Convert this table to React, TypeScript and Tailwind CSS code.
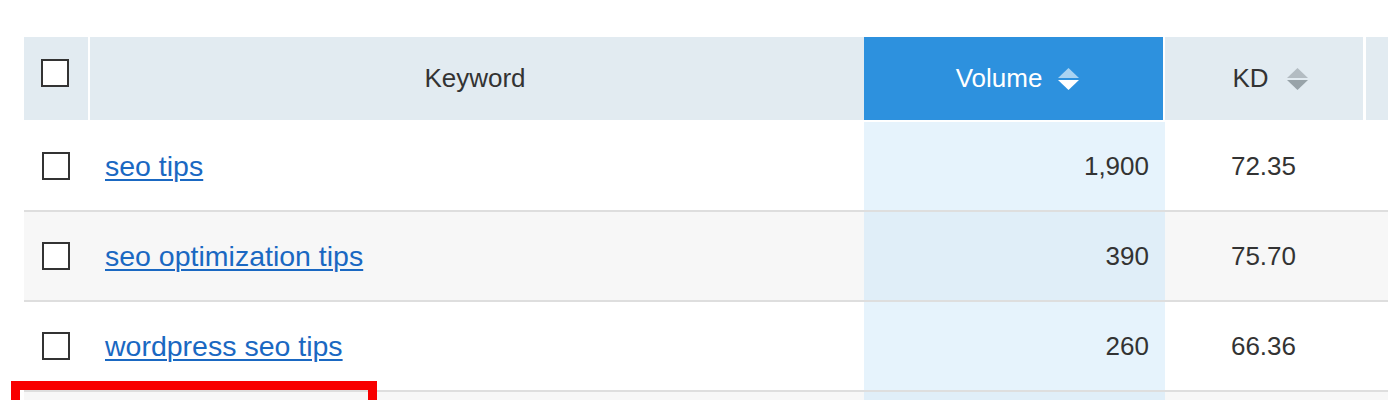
const rows = [
  { keyword: "seo tips", volume: "1,900", kd: "72.35" },
  { keyword: "seo optimization tips", volume: "390", kd: "75.70" },
  { keyword: "wordpress seo tips", volume: "260", kd: "66.36" },
  { keyword: "", volume: "", kd: "" },
]

const SortIcon = ({ up, down }: { up: string; down: string }) => (
  <svg width="21" height="22" viewBox="0 0 21 22">
    <polygon points="10.5,0 21,10 0,10" fill={up} />
    <polygon points="0,12 21,12 10.5,22" fill={down} />
  </svg>
)

const Box = () => <div className="w-[28px] h-[28px] border-2 border-[#333] bg-white shrink-0" />

const App = () => {
  return (
    <div className="relative h-[400px] w-[1388px] overflow-hidden bg-white font-['Liberation_Sans',Arial,sans-serif] text-[#333]">
      <div className="pt-[37px] pl-[24px]">
        <div className="w-[1500px]">
          {/* header */}
          <div className="flex h-[85px] bg-[#e2ebf1] text-[26px] border-b-2 border-white">
            <div className="w-[66px] border-r-2 border-white pl-[17px] pt-[22px]">
              <Box />
            </div>
            <div className="w-[774px] flex items-center justify-center pr-[4px]">Keyword</div>
            <div className="w-[301px] border-r-2 border-white bg-[#2d91de] text-white flex items-center justify-center gap-[16px] pl-[8px]">
              Volume
              <SortIcon up="#a9d3f2" down="#ffffff" />
            </div>
            <div className="w-[201px] border-r-[3px] border-white flex items-center justify-center gap-[18px] pl-[12px]">
              KD
              <SortIcon up="#b3bcc2" down="#98a3a9" />
            </div>
            <div className="flex-1" />
          </div>
          {/* body */}
          {rows.map((r, i) => (
            <div
              key={i}
              className={`flex h-[90px] border-b-2 border-[#dedede] ${i % 2 === 1 ? "bg-[#f7f7f7]" : "bg-white"}`}
            >
              <div className="w-[66px] pl-[18px] flex items-center">
                {r.keyword && <Box />}
              </div>
              <div className="w-[774px] flex items-center pl-[15px]">
                <a href="#" className="text-[28.5px] text-[#1a68c2] underline underline-offset-[3px] decoration-[1.5px]">
                  {r.keyword}
                </a>
              </div>
              <div
                className={`w-[301px] flex items-center justify-end pr-[16px] text-[26px] ${i % 2 === 1 ? "bg-[#e0eef8]" : "bg-[#e6f3fc]"}`}
              >
                {r.volume}
              </div>
              <div className="w-[197px] flex items-center justify-center text-[26px]">{r.kd}</div>
              <div className="flex-1" />
            </div>
          ))}
        </div>
      </div>
      <div className="absolute left-[11px] top-[381px] w-[366px] h-[60px] border-[9px] border-[#f80000]" />
    </div>
  )
}

export default App
